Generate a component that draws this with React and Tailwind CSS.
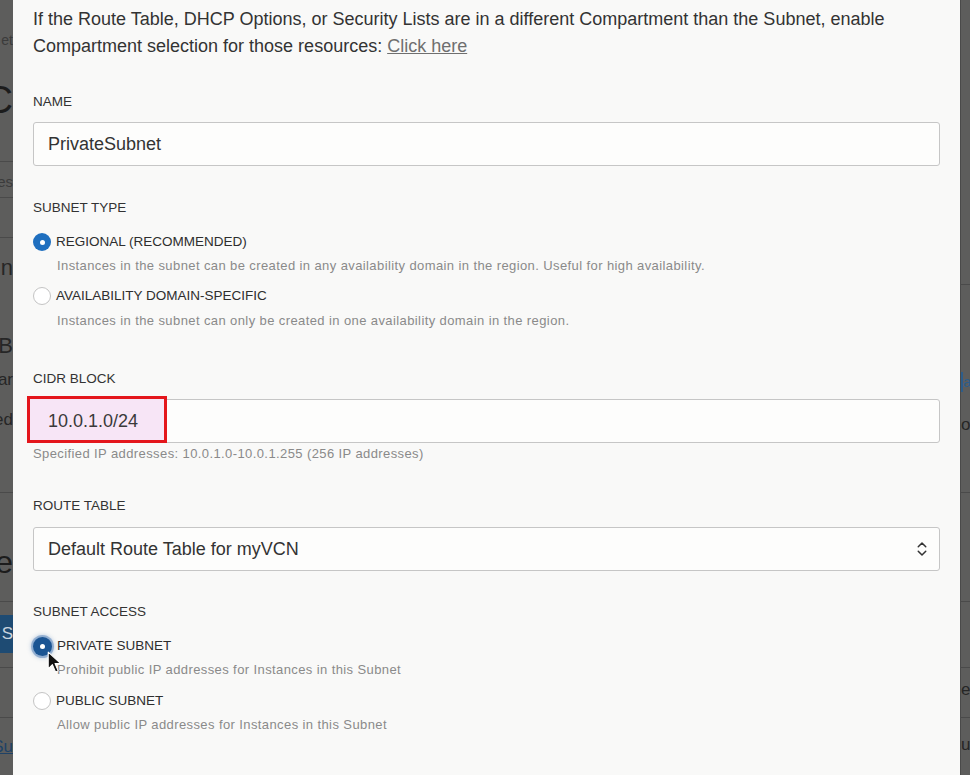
import React from 'react'
import { ChevronsUpDown } from 'lucide-react'

const font = { fontFamily: '"Liberation Sans", Arial, sans-serif' }

const Line = () => <div className="h-px bg-[#4a4a4a]" />

const LeftStrip = () => (
  <div className="w-[13px] shrink-0 overflow-hidden bg-[#5d5d5c] text-[#262626]">
    <div className="h-[30px]" />
    <div className="flex h-[20px] items-center justify-end whitespace-nowrap text-[14px] text-[#3b3b3b]">et</div>
    <div className="h-[30px]" />
    <div className="flex h-[40px] items-center justify-end whitespace-nowrap text-[38px] text-[#1c1c1c]">C</div>
    <div className="h-[41px]" />
    <Line />
    <div className="h-[10px]" />
    <div className="flex h-[20px] items-center justify-end whitespace-nowrap text-[15px] text-[#3b3b3b]">es</div>
    <div className="h-[5px]" />
    <Line />
    <div className="h-[39px]" />
    <Line />
    <div className="h-[17px]" />
    <div className="flex h-[24px] items-center justify-end whitespace-nowrap text-[22px]">In</div>
    <div className="h-[54px]" />
    <div className="flex h-[24px] items-center justify-end whitespace-nowrap text-[22px]">B</div>
    <div className="h-[13px]" />
    <div className="flex h-[20px] items-center justify-end whitespace-nowrap text-[17px]">ar</div>
    <div className="h-[20px]" />
    <div className="flex h-[20px] items-center justify-end whitespace-nowrap text-[17px]">ed</div>
    <div className="h-[62px]" />
    <Line />
    <div className="h-[51px]" />
    <div className="flex h-[36px] items-center justify-end whitespace-nowrap text-[32px] text-[#1c1c1c]">ne</div>
    <div className="h-[21px]" />
    <Line />
    <div className="h-[13px]" />
    <div className="flex h-[38px] items-center justify-end whitespace-nowrap bg-[#1e4b73] text-[17px] text-[#c9d4de]">e S</div>
    <div className="h-[14px]" />
    <Line />
    <div className="h-[49px]" />
    <Line />
    <div className="h-[19px]" />
    <div className="flex h-[20px] items-center justify-end whitespace-nowrap text-[17px] text-[#1f4266] underline">Su</div>
  </div>
)

const RightStrip = () => (
  <div className="w-[10px] shrink-0 overflow-hidden border-l border-[#4a4a4a] bg-[#5d5d5c] text-[#262626]">
    <div className="h-[284px]" />
    <Line />
    <div className="h-[87px]" />
    <div className="flex h-[20px] items-center whitespace-nowrap border-l-2 border-[#2d5d8a] text-[15px] text-[#2d5d8a]">a</div>
    <div className="h-[23px]" />
    <div className="flex h-[20px] items-center whitespace-nowrap text-[17px]">o</div>
    <div className="h-[57px]" />
    <Line />
    <div className="h-[108px]" />
    <Line />
    <div className="h-[65px]" />
    <Line />
    <div className="h-[12px]" />
    <div className="flex h-[20px] items-center whitespace-nowrap text-[17px]">ea</div>
    <div className="h-[17px]" />
    <Line />
    <div className="h-[17px]" />
    <div className="flex h-[20px] items-center whitespace-nowrap text-[17px]">u,</div>
  </div>
)

const Label = ({ children, className = '' }) => (
  <div className={`h-[16px] text-[13.5px] leading-[16px] text-[#333] ${className}`}>{children}</div>
)

const Radio = ({ checked, focused }) => {
  if (focused) {
    return (
      <span className="flex h-[19px] w-[19px] shrink-0 items-center justify-center rounded-full bg-[#1b5593] shadow-[0_0_0_2px_rgba(70,120,180,0.45),0_0_4px_2px_rgba(70,120,180,0.35)]">
        <span className="h-[5px] w-[5px] rounded-full bg-white" />
      </span>
    )
  }
  if (checked) {
    return (
      <span className="flex h-[18px] w-[18px] shrink-0 items-center justify-center rounded-full bg-[#1f6fbf]">
        <span className="h-[5px] w-[5px] rounded-full bg-white" />
      </span>
    )
  }
  return <span className="h-[18px] w-[18px] shrink-0 rounded-full border border-[#c4c4c4] bg-white" />
}

const RadioOption = ({ label, desc, checked, focused, descClass = 'mt-[6px]' }) => (
  <div>
    <div className="flex h-[20px] items-center gap-[5px]">
      <Radio checked={checked} focused={focused} />
      <span className="text-[13.5px] text-[#2e2e2e]">{label}</span>
    </div>
    <div className={`h-[16px] whitespace-nowrap pl-[24px] text-[13px] leading-[16px] tracking-[0.4px] text-[#8a8a8a] ${descClass}`}>{desc}</div>
  </div>
)

const Cursor = () => (
  <svg className="absolute left-[14px] top-[15px]" width="15" height="23" viewBox="0 0 14 22">
    <path d="M1 1 L1 17 L5 13 L8 20 L10.5 19 L7.5 12 L13 12 Z" fill="#111" stroke="#fff" strokeWidth="1" strokeLinejoin="round" />
  </svg>
)

export default function App() {
  return (
    <div className="flex h-[775px] w-[970px] overflow-hidden" style={font}>
      <LeftStrip />
      <div className="flex-1 bg-[#f9f9f8] px-5 pt-[6px] text-[#333]">
        <p className="text-[18px] leading-[27px] text-[#333]">
          If the Route Table, DHCP Options, or Security Lists are in a different Compartment than the Subnet, enable
          <br />
          Compartment selection for those resources: <span className="text-[#6f6f6f] underline">Click here</span>
        </p>

        <Label className="mt-[34px]">NAME</Label>
        <div className="mt-[12px] flex h-[44px] items-center rounded-[3px] border border-[#c6c6c6] bg-[#fdfdfc] px-[14px] text-[18px] text-[#333]">
          PrivateSubnet
        </div>

        <Label className="mt-[34px]">SUBNET TYPE</Label>
        <div className="mt-[16px]">
          <RadioOption
            checked
            label="REGIONAL (RECOMMENDED)"
            desc="Instances in the subnet can be created in any availability domain in the region. Useful for high availability."
          />
        </div>
        <div className="mt-[12px]">
          <RadioOption
            label="AVAILABILITY DOMAIN-SPECIFIC"
            desc="Instances in the subnet can only be created in one availability domain in the region."
            descClass="mt-[7px]"
          />
        </div>

        <Label className="mt-[42px]">CIDR BLOCK</Label>
        <div className="relative mt-[12px] flex h-[44px] items-center rounded-[3px] border border-[#c6c6c6] bg-[#fdfdfc] text-[18px] text-[#3a3a3a]">
          <div className="absolute -left-[7px] -top-[4px] h-[47px] w-[140px] border-[3px] border-[#e4161c] bg-[#f7e5f6]" />
          <span className="relative pl-[14px]">10.0.1.0/24</span>
        </div>
        <div className="mt-[3px] h-[16px] whitespace-nowrap text-[13px] leading-[16px] tracking-[0.4px] text-[#8a8a8a]">
          Specified IP addresses: 10.0.1.0-10.0.1.255 (256 IP addresses)
        </div>

        <Label className="mt-[36px]">ROUTE TABLE</Label>
        <div className="mt-[13px] flex h-[44px] items-center justify-between rounded-[3px] border border-[#c6c6c6] bg-[#fdfdfc] pl-[14px] pr-[8px] text-[18px] text-[#333]">
          <span>Default Route Table for myVCN</span>
          <ChevronsUpDown className="h-[18px] w-[18px] text-[#333]" strokeWidth={2} />
        </div>

        <Label className="mt-[33px]">SUBNET ACCESS</Label>
        <div className="relative mt-[16px]">
          <RadioOption focused label="PRIVATE SUBNET" desc="Prohibit public IP addresses for Instances in this Subnet" />
          <Cursor />
        </div>
        <div className="mt-[13px]">
          <RadioOption label="PUBLIC SUBNET" desc="Allow public IP addresses for Instances in this Subnet" />
        </div>
      </div>
      <RightStrip />
    </div>
  )
}
